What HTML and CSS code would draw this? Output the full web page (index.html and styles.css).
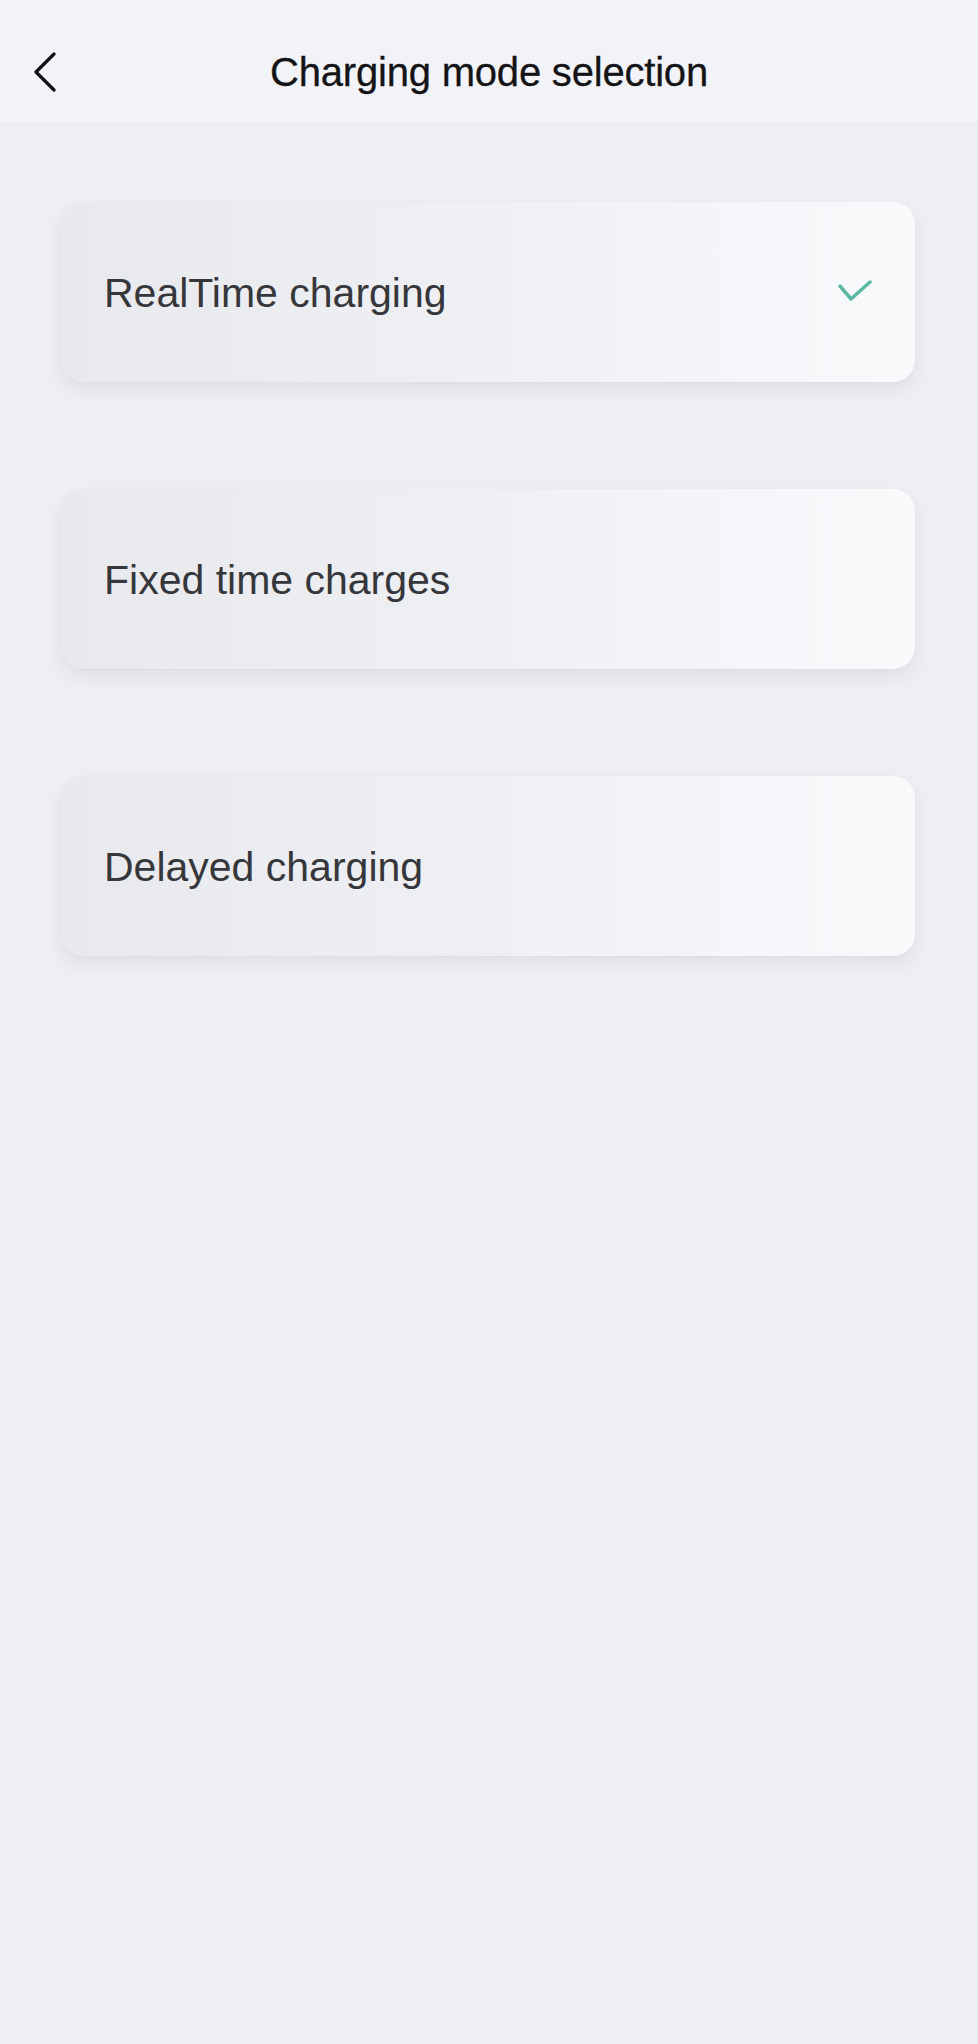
FILE: index.html
```html
<!DOCTYPE html>
<html>
	<head>
		<title>Charging mode selection</title>
		<link rel="stylesheet" href="styles.css">
	</head>
	<body>
		<div class="topbar">
			<button class="back" aria-label="Back">
				<svg width="24" height="40" viewBox="0 0 24 40">
					<path d="M21 2 L3 20 L21 38" />
				</svg>
			</button>
			<div class="title">Charging mode selection</div>
		</div>
		<div class="modes">
			<div class="mode selected">
				<span>RealTime charging</span>
				<svg class="check" width="34" height="24" viewBox="0 0 34 24">
					<path d="M2 6 L13 19 L32 2" />
				</svg>
			</div>
			<div class="mode">
				<span>Fixed time charges</span>
			</div>
			<div class="mode">
				<span>Delayed charging</span>
			</div>
		</div>
	</body>
</html>
```
FILE: styles.css
```css
html {
	height: 100%;
}
body {
	margin: 0;
	min-height: 100%;
	background: #eeeff3;
	font-family: "Liberation Sans", Arial, sans-serif;
}
.topbar {
	position: relative;
	height: 100px;
	padding-top: 22px;
	display: flex;
	align-items: center;
	justify-content: center;
	background: #f2f3f7;
	box-shadow: 0 3px 6px rgba(0, 0, 0, 0.01);
}
.back {
	position: absolute;
	left: 33px;
	top: 52px;
	border: none;
	background: none;
	padding: 0;
	cursor: pointer;
}
.back svg {
	display: block;
}
.back path {
	fill: none;
	stroke: #111;
	stroke-width: 3.2;
	stroke-linecap: round;
	stroke-linejoin: round;
}
.title {
	font-size: 40px;
	color: #141416;
	letter-spacing: -0.2px;
	-webkit-text-stroke: 0.3px #141416;
}
.modes {
	display: flex;
	flex-direction: column;
	gap: 107px;
	padding: 80px 63px 0 61px;
}
.mode {
	height: 180px;
	box-sizing: border-box;
	padding: 0 43px;
	display: flex;
	align-items: center;
	justify-content: space-between;
	border-radius: 22px;
	background: linear-gradient(90deg, #e8e9ed 0%, #eff0f3 50%, #f9fafc 100%);
	box-shadow: 0 8px 18px rgba(40, 45, 60, 0.07), 0 1px 3px rgba(40, 45, 60, 0.03);
	font-size: 41px;
	color: #36373b;
	cursor: pointer;
}
.mode span {
	padding-top: 2px;
}
.check path {
	fill: none;
	stroke: #5db9a3;
	stroke-width: 3.5;
	stroke-linecap: round;
	stroke-linejoin: round;
}
```
